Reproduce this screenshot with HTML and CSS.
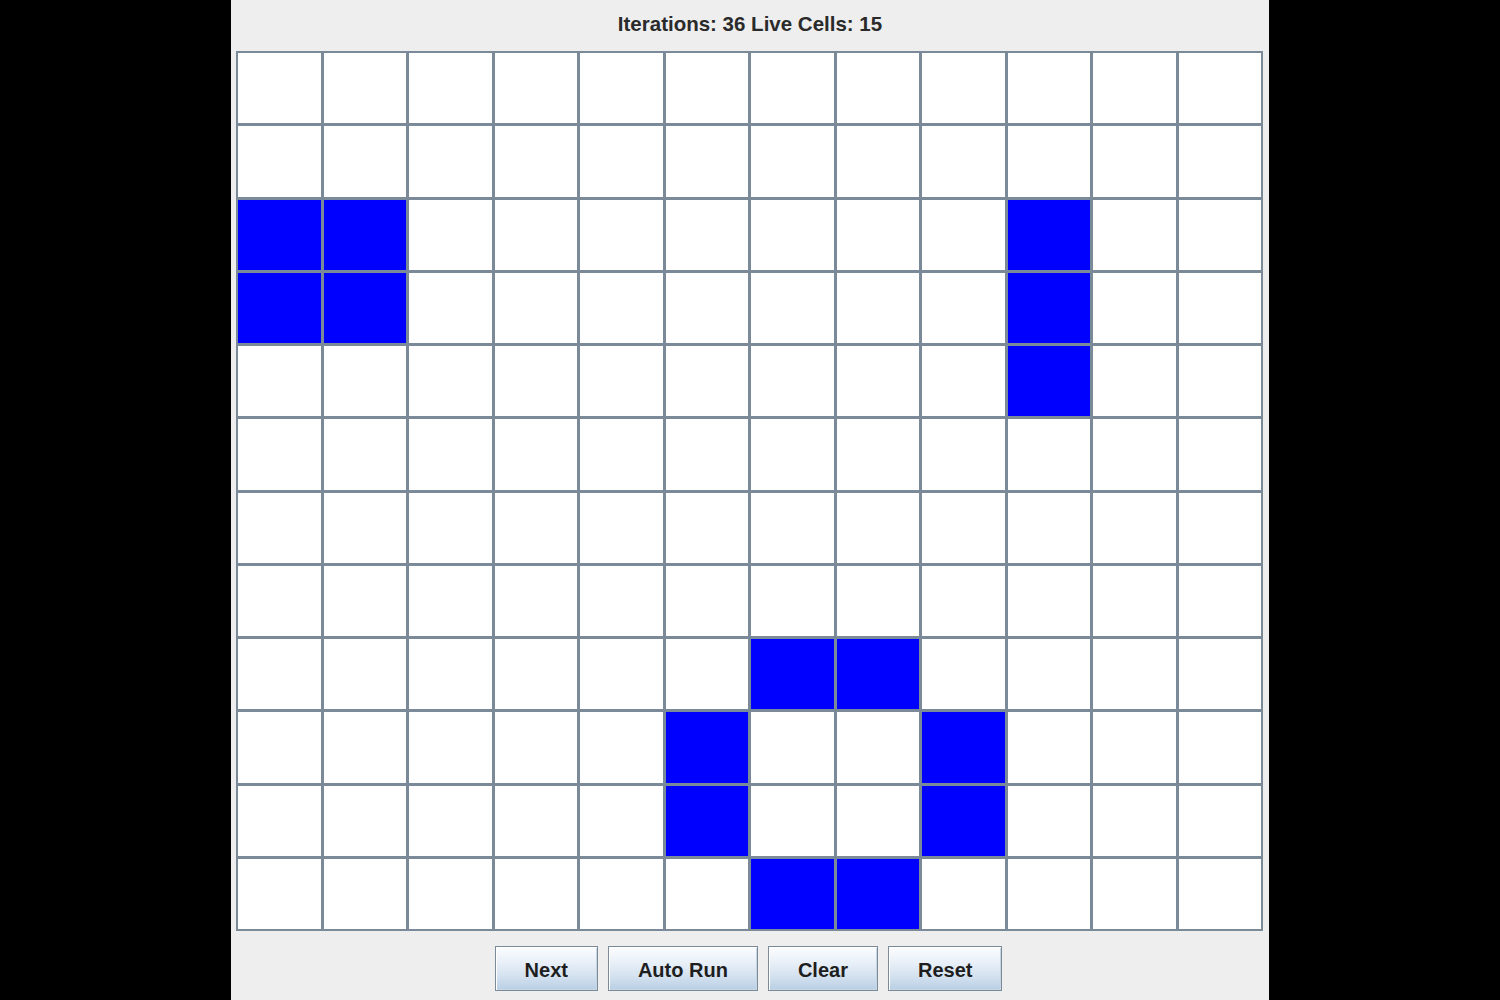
FILE: index.html
```html
<!DOCTYPE html>
<html>
<head>
<meta charset="utf-8">
<title>Game of Life</title>
<link rel="stylesheet" href="styles.css">
</head>
<body>
<div class="panel">
  <div class="title">Iterations: 36 Live Cells: 15</div>
  <div class="board">
    <div class="grid">
      <div class="c"></div><div class="c"></div><div class="c"></div><div class="c"></div><div class="c"></div><div class="c"></div><div class="c"></div><div class="c"></div><div class="c"></div><div class="c"></div><div class="c"></div><div class="c"></div>
      <div class="c"></div><div class="c"></div><div class="c"></div><div class="c"></div><div class="c"></div><div class="c"></div><div class="c"></div><div class="c"></div><div class="c"></div><div class="c"></div><div class="c"></div><div class="c"></div>
      <div class="c on"></div><div class="c on"></div><div class="c"></div><div class="c"></div><div class="c"></div><div class="c"></div><div class="c"></div><div class="c"></div><div class="c"></div><div class="c on"></div><div class="c"></div><div class="c"></div>
      <div class="c on"></div><div class="c on"></div><div class="c"></div><div class="c"></div><div class="c"></div><div class="c"></div><div class="c"></div><div class="c"></div><div class="c"></div><div class="c on"></div><div class="c"></div><div class="c"></div>
      <div class="c"></div><div class="c"></div><div class="c"></div><div class="c"></div><div class="c"></div><div class="c"></div><div class="c"></div><div class="c"></div><div class="c"></div><div class="c on"></div><div class="c"></div><div class="c"></div>
      <div class="c"></div><div class="c"></div><div class="c"></div><div class="c"></div><div class="c"></div><div class="c"></div><div class="c"></div><div class="c"></div><div class="c"></div><div class="c"></div><div class="c"></div><div class="c"></div>
      <div class="c"></div><div class="c"></div><div class="c"></div><div class="c"></div><div class="c"></div><div class="c"></div><div class="c"></div><div class="c"></div><div class="c"></div><div class="c"></div><div class="c"></div><div class="c"></div>
      <div class="c"></div><div class="c"></div><div class="c"></div><div class="c"></div><div class="c"></div><div class="c"></div><div class="c"></div><div class="c"></div><div class="c"></div><div class="c"></div><div class="c"></div><div class="c"></div>
      <div class="c"></div><div class="c"></div><div class="c"></div><div class="c"></div><div class="c"></div><div class="c"></div><div class="c on"></div><div class="c on"></div><div class="c"></div><div class="c"></div><div class="c"></div><div class="c"></div>
      <div class="c"></div><div class="c"></div><div class="c"></div><div class="c"></div><div class="c"></div><div class="c on"></div><div class="c"></div><div class="c"></div><div class="c on"></div><div class="c"></div><div class="c"></div><div class="c"></div>
      <div class="c"></div><div class="c"></div><div class="c"></div><div class="c"></div><div class="c"></div><div class="c on"></div><div class="c"></div><div class="c"></div><div class="c on"></div><div class="c"></div><div class="c"></div><div class="c"></div>
      <div class="c"></div><div class="c"></div><div class="c"></div><div class="c"></div><div class="c"></div><div class="c"></div><div class="c on"></div><div class="c on"></div><div class="c"></div><div class="c"></div><div class="c"></div><div class="c"></div>
    </div>
  </div>
  <div class="buttons">
    <button class="btn">Next</button>
    <button class="btn">Auto Run</button>
    <button class="btn">Clear</button>
    <button class="btn">Reset</button>
  </div>
</div>
</body>
</html>
```

FILE: styles.css
```css
html, body {
  margin: 0;
  padding: 0;
  background: #000;
}

body {
  font-family: "Liberation Sans", Arial, sans-serif;
}

.panel {
  width: 1038px;
  height: 1000px;
  margin: 0 auto;
  background: #eeeeee;
  display: flex;
  flex-direction: column;
  box-sizing: border-box;
}

.title {
  padding-top: 12px;
  height: 24px;
  line-height: 24px;
  margin-bottom: 15px;
  text-align: center;
  font-weight: bold;
  font-size: 20.5px;
  color: #2a2a2a;
}

.board {
  padding-left: 5px;
}

.grid {
  width: 1027px;
  height: 880px;
  box-sizing: border-box;
  background: #7a8a99;
  padding: 2px;
  display: grid;
  grid-template-columns: repeat(12, 1fr);
  grid-template-rows: repeat(12, 1fr);
  gap: 3px;
}

.c {
  background: #ffffff;
}

.c.on {
  background: #0000ff;
}

.buttons {
  margin-top: 15px;
  display: flex;
  justify-content: center;
  gap: 10px;
  padding-right: 3px;
}

.btn {
  height: 45px;
  padding: 3px 29px 0;
  border: 1px solid #7a8a99;
  border-radius: 0;
  font-family: "Liberation Sans", Arial, sans-serif;
  font-weight: bold;
  font-size: 20px;
  color: #1e1e1e;
  background: linear-gradient(to bottom, #fbfdff 0%, #e9f0f8 35%, #d6e3f0 65%, #b9cfe5 100%);
  box-shadow: inset 1px 1px 0 #ffffff, inset -1px -1px 0 #c8d6e4;
  cursor: pointer;
}
```
